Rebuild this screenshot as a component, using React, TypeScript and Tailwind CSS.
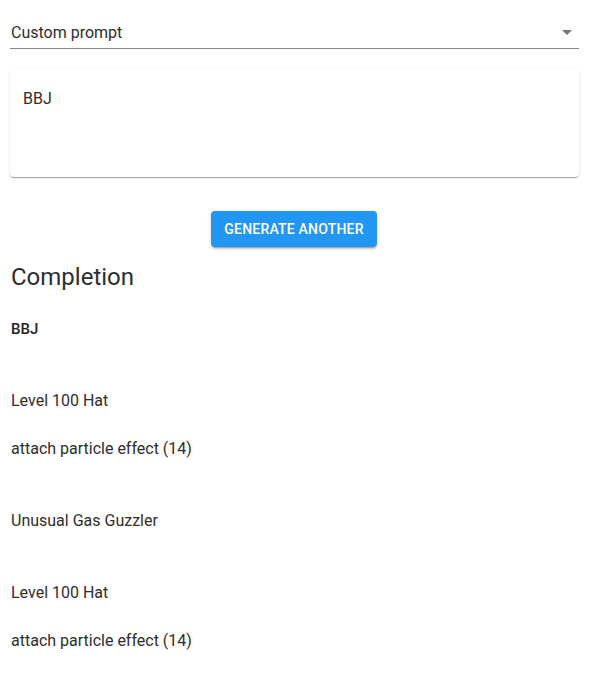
export default function App() {
  const lines: { text: string; bold?: boolean }[] = [
    { text: 'BBJ', bold: true },
    { text: '' },
    { text: '' },
    { text: 'Level 100 Hat' },
    { text: '' },
    { text: 'attach particle effect (14)' },
    { text: '' },
    { text: '' },
    { text: 'Unusual Gas Guzzler' },
    { text: '' },
    { text: '' },
    { text: 'Level 100 Hat' },
    { text: '' },
    { text: 'attach particle effect (14)' },
  ];

  return (
    <div className="min-h-screen bg-white font-['Roboto',sans-serif] text-[#2e2e2e]">
      <div className="w-[569px] ml-[10px] pt-[16px]">
        <div className="flex items-center justify-between h-[33px] border-b border-[#8a8a8a] pl-[1px] pr-[7px]">
          <span className="text-[16px] leading-[24px] pt-[2px]">Custom prompt</span>
          <span className="w-0 h-0 border-l-[5px] border-r-[5px] border-t-[5px] border-l-transparent border-r-transparent border-t-[#757575]" />
        </div>

        <div className="mt-[20px] h-[108px] rounded-[4px] bg-white px-[13px] pt-[18px] shadow-[0_2px_1px_-1px_rgba(0,0,0,0.2),0_1px_1px_0_rgba(0,0,0,0.14),0_1px_3px_0_rgba(0,0,0,0.12)]">
          <div className="text-[16px] leading-[24px]">BBJ</div>
        </div>

        <div className="flex justify-center mt-[34px]">
          <button className="h-[36px] w-[166px] -ml-[1px] rounded-[4px] bg-[#2196f3] text-white text-[14px] font-medium uppercase tracking-[0.2px] shadow-[0_3px_1px_-2px_rgba(0,0,0,0.2),0_2px_2px_0_rgba(0,0,0,0.14),0_1px_5px_0_rgba(0,0,0,0.12)]">
            Generate Another
          </button>
        </div>

        <h2 className="mt-[14px] pl-[1px] text-[24px] leading-[32px] font-normal">Completion</h2>

        <div className="mt-[24px] pl-[1px] text-[16px]">
          {lines.map((l, i) => (
            <div key={i} className={l.bold ? 'h-[24px] leading-[24px] text-[15px] font-medium text-[#222]' : 'h-[24px] leading-[24px]'}>
              {l.text}
            </div>
          ))}
        </div>
      </div>
    </div>
  );
}
